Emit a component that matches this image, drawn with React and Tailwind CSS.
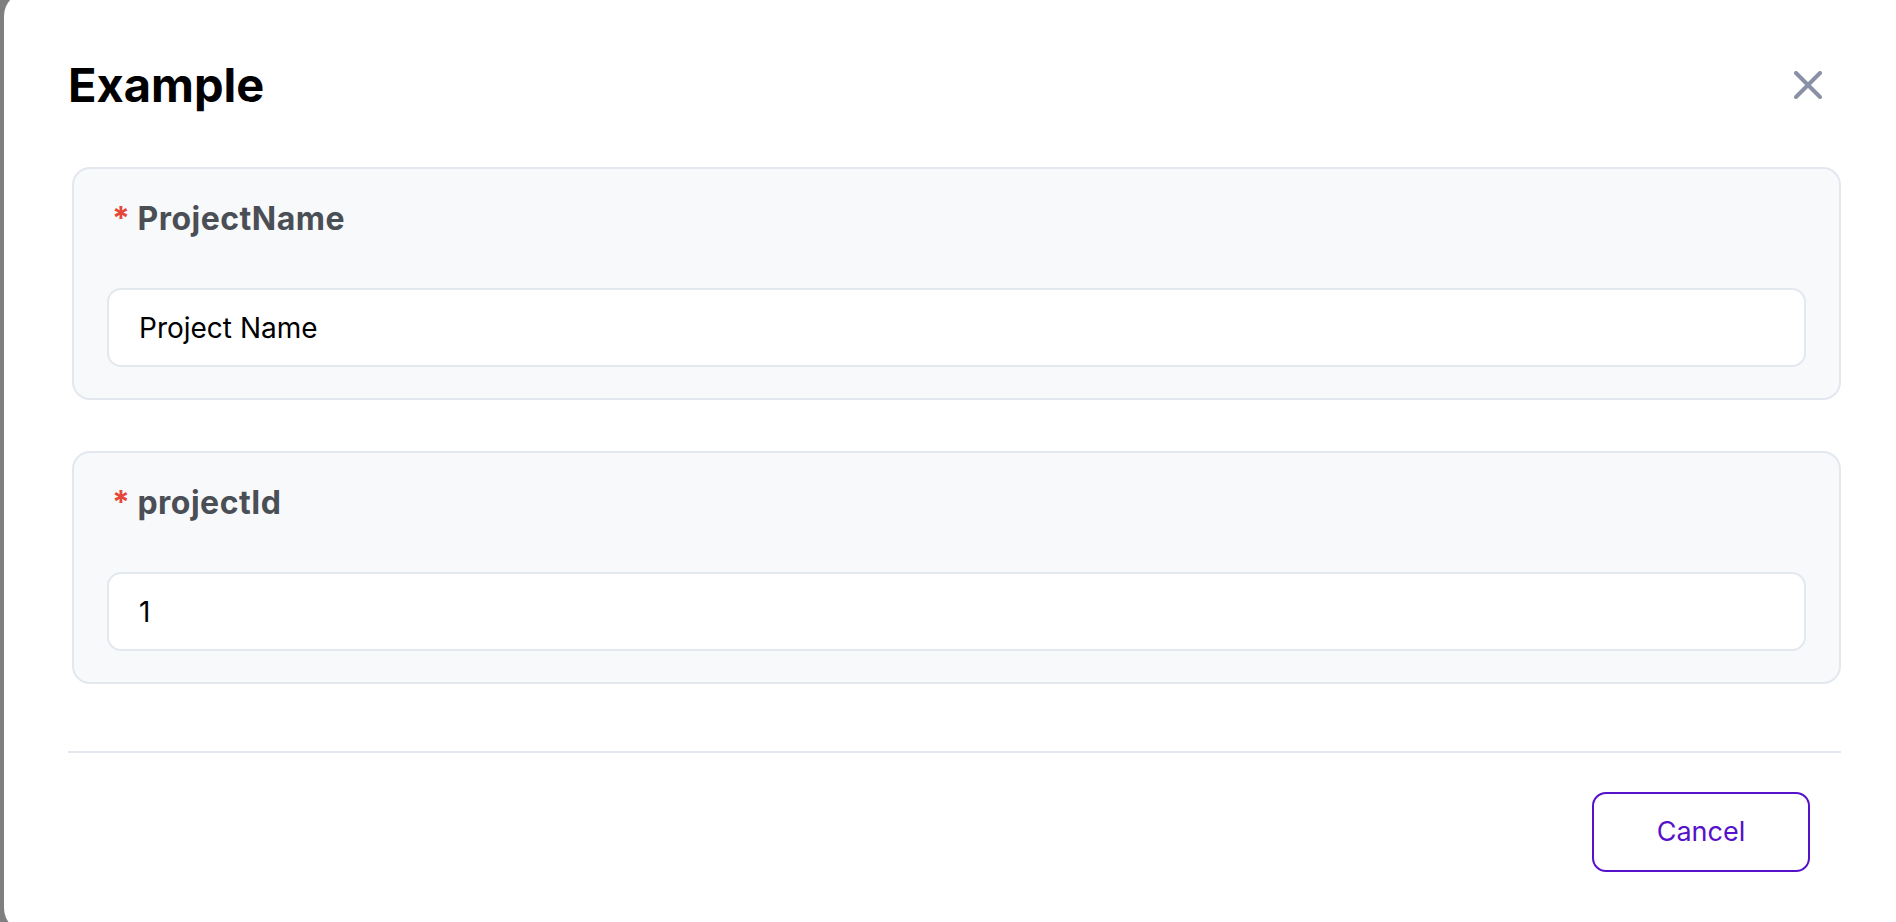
import React from "react";

function Field({ label, value }) {
  return (
    <div className="ml-[4px] rounded-[18px] border-2 border-[#e3e8ef] bg-[#f8f9fb] px-[33px] pb-[31px] pt-[31px]">
      <div className="flex items-start pl-[5px] text-[32px] font-bold leading-[38px] tracking-[0.5px] text-[#4a4f56]">
        <span className="mr-[7px] text-[#e5483a]">*</span>
        <span>{label}</span>
      </div>
      <input
        readOnly
        value={value}
        className="mt-[50px] block h-[79px] w-full rounded-[14px] border-2 border-[#e3e8ef] bg-white pl-[30px] text-[28px] text-black outline-none"
        style={{ fontFamily: "Inter, 'Liberation Sans', sans-serif" }}
      />
    </div>
  );
}

export default function App() {
  return (
    <div
      className="h-[922px] w-full overflow-hidden bg-[#7f7f7f] pl-[4px]"
      style={{ fontFamily: "Inter, 'Liberation Sans', sans-serif" }}
    >
      <div className="-mt-[8px] h-[940px] w-full rounded-l-[24px] bg-white pt-[8px]">
        <div className="ml-[64px] w-[1773px]">
          <div className="flex items-center justify-between pt-[56px]">
            <h1 className="text-[47px] font-bold leading-[58px] text-black">Example</h1>
            <button className="mr-[19px] flex h-[28px] w-[28px] items-center justify-center" aria-label="Close">
              <svg width="28" height="28" viewBox="0 0 28 28" fill="none">
                <path d="M2 2L26 26M26 2L2 26" stroke="#8a90a7" strokeWidth="4" strokeLinecap="round" />
              </svg>
            </button>
          </div>
          <div className="mt-[53px]">
            <Field label="ProjectName" value="Project Name" />
          </div>
          <div className="mt-[51px]">
            <Field label="projectId" value="1" />
          </div>
          <div className="mt-[67px] h-[2px] w-full bg-[#e3e8ef]" />
          <div className="mt-[39px] flex justify-end pr-[31px]">
            <button className="flex h-[80px] w-[218px] items-center justify-center rounded-[14px] border-2 border-[#5611c9] bg-white text-[27px] text-[#5611c9]">
              Cancel
            </button>
          </div>
        </div>
      </div>
    </div>
  );
}
